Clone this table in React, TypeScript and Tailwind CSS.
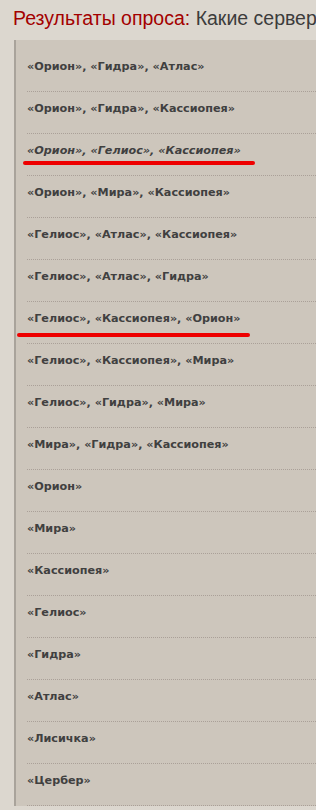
import React from 'react';

const answers: { text: string; italic?: boolean; mark?: 'a' | 'b' }[] = [
    { text: '«Орион», «Гидра», «Атлас»' },
    { text: '«Орион», «Гидра», «Кассиопея»' },
    { text: '«Орион», «Гелиос», «Кассиопея»', italic: true, mark: 'a' },
    { text: '«Орион», «Мира», «Кассиопея»' },
    { text: '«Гелиос», «Атлас», «Кассиопея»' },
    { text: '«Гелиос», «Атлас», «Гидра»' },
    { text: '«Гелиос», «Кассиопея», «Орион»', mark: 'b' },
    { text: '«Гелиос», «Кассиопея», «Мира»' },
    { text: '«Гелиос», «Гидра», «Мира»' },
    { text: '«Мира», «Гидра», «Кассиопея»' },
    { text: '«Орион»' },
    { text: '«Мира»' },
    { text: '«Кассиопея»' },
    { text: '«Гелиос»' },
    { text: '«Гидра»' },
    { text: '«Атлас»' },
    { text: '«Лисичка»' },
    { text: '«Цербер»' },
];

const App = () => {
    return (
        <div className="h-[810px] w-[316px] overflow-hidden bg-[#dcd7cf] font-['DejaVu_Sans',sans-serif]">
            <h1 className="whitespace-nowrap pl-[13px] pt-[5px] font-['Liberation_Sans',sans-serif] text-[19.5px] leading-[26px] text-[#3c3c3c]">
                <span className="text-[#a30000]">Результаты опроса:</span> Какие серверы вы выбрали бы для игры?
            </h1>
            <div className="ml-[14px] mt-[9px] border-l-2 border-[#a9a39b] bg-[#cdc6bc] pl-[11px] pt-[10px]">
                {answers.map((a) => (
                    <div key={a.text} className="relative border-b border-dotted border-[#aaa098] pt-[7px] pb-[14px]">
                        <div className={`whitespace-nowrap text-[11.2px] leading-[20px] font-bold text-[#404040] ${a.italic ? 'italic' : ''}`}>
                            {a.text}
                        </div>
                        {a.mark === 'a' && (
                            <div className="absolute left-[-4px] top-[27px] h-[4px] w-[232px] rounded-full bg-[#ee0000]" />
                        )}
                        {a.mark === 'b' && (
                            <div className="absolute left-[-10px] top-[31px] h-[4px] w-[233px] rounded-full bg-[#ee0000]" />
                        )}
                    </div>
                ))}
            </div>
        </div>
    );
};

export default App;
